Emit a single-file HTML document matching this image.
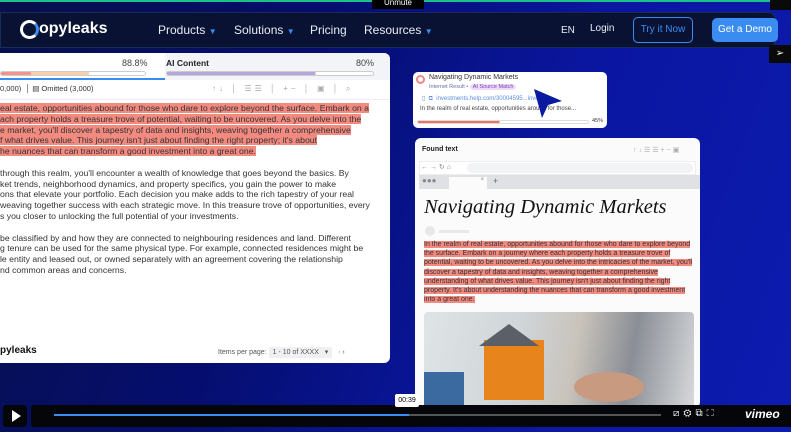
<!DOCTYPE html>
<html><head><meta charset="utf-8"><style>
*{box-sizing:border-box;margin:0;padding:0}
body{width:791px;height:432px;overflow:hidden;position:relative;font-family:"Liberation Sans",sans-serif;background:linear-gradient(110deg,#07104a 0%,#050e6e 35%,#0a16a0 65%,#0d1cb0 100%)}
.abs{position:absolute}
.nav{left:0;top:12px;width:776px;height:36px;background:#0a1233;border:1px solid #1c2a5a;border-radius:0 8px 8px 0}
.nav span{position:absolute;color:#e8ecf5;font-size:12px;top:10px}
.hl{background:#f28a80}
.lp{left:0;top:53px;width:390px;height:310px;background:#fff;border-radius:0 6px 6px 0;overflow:hidden}
.txt{font-size:8.7px;line-height:10.8px;color:#333;white-space:nowrap}
.ftxt{font-size:7px;line-height:9.2px;color:#333;white-space:nowrap}
</style></head><body>
<div class="abs" style="left:0;top:0;width:791px;height:2px;background:#1ec08a"></div>
<div class="abs" style="left:372px;top:0;width:52px;height:9px;background:#000;color:#fff;font-size:8px;line-height:5px;text-align:center">Unmute</div>
<div class="abs" style="left:770px;top:0;width:21px;height:10px;background:#0a0a0a"></div>
<div class="abs nav">
 <div class="abs" style="left:19px;top:7px;width:19px;height:19px;border:3px solid #fff;border-radius:50%;border-right-color:#3a8cf0"></div>
 <span style="left:38px;top:7px;font-size:16px;font-weight:bold;color:#fff">opyleaks</span>
 <span style="left:157px">Products <b style="color:#3a8cf0;font-size:8px">▼</b></span>
 <span style="left:233px">Solutions <b style="color:#3a8cf0;font-size:8px">▼</b></span>
 <span style="left:309px">Pricing</span>
 <span style="left:363px">Resources <b style="color:#3a8cf0;font-size:8px">▼</b></span>
 <span style="left:560px;font-size:10px;top:12px">EN</span>
 <span style="left:589px;font-size:10px;top:10px">Login</span>
 <div class="abs" style="left:632px;top:4px;width:60px;height:26px;border:1px solid #3a8cf0;border-radius:5px;color:#3a8cf0;font-size:10px;line-height:24px;text-align:center">Try it Now</div>
 <div class="abs" style="left:711px;top:5px;width:66px;height:24px;background:#3a8cf0;border-radius:5px;color:#fff;font-size:10px;line-height:24px;text-align:center">Get a Demo</div>
</div>
<div class="abs" style="left:769px;top:45px;width:22px;height:18px;background:#0a0a0a;color:#fff;font-size:10px;text-align:center;line-height:18px">➢</div>

<div class="abs lp">
 <div class="abs" style="left:0;top:0;width:165px;height:27px;border-bottom:2px solid #3a8cf0"></div>
 <div class="abs" style="left:122px;top:5px;font-size:9px;color:#444">88.8%</div>
 <div class="abs" style="left:0;top:18px;width:146px;height:5px;border:1px solid #ccc;border-radius:3px;background:linear-gradient(90deg,#f5938a 0 21%,#fbd0a8 21% 61%,#fff 61%)"></div>
 <div class="abs" style="left:165px;top:0;width:225px;height:27px;background:#f3f4f7"></div>
 <div class="abs" style="left:166px;top:5px;font-size:8.5px;font-weight:bold;color:#222">AI Content</div>
 <div class="abs" style="left:356px;top:5px;font-size:9px;color:#444">80%</div>
 <div class="abs" style="left:166px;top:18px;width:208px;height:5px;border:1px solid #ccc;border-radius:3px;background:linear-gradient(90deg,#b8a5dc 0 72%,#fff 72%)"></div>
 <div class="abs" style="left:0;top:31px;font-size:7.5px;color:#333">0,000) &nbsp;│ ▤ Omitted (3,000)</div>
 <div class="abs" style="left:212px;top:31px;font-size:8px;color:#aaa;letter-spacing:3px">↑↓ │ ☰☰ │ +− │ ▣ │ ⌕</div>
 <div class="abs" style="left:0;top:46px;width:390px;height:1px;background:#eee"></div>
 <div class="abs txt" style="left:0;top:50px">
  <span class="hl">eal estate, opportunities abound for those who dare to explore beyond the surface. Embark on a</span><br>
  <span class="hl">ach property holds a treasure trove of potential, waiting to be uncovered. As you delve into the</span><br>
  <span class="hl">e market, you'll discover a tapestry of data and insights, weaving together a comprehensive</span><br>
  <span class="hl">f what drives value. This journey isn't just about finding the right property; it's about</span><br>
  <span class="hl">he nuances that can transform a good investment into a great one.</span><br><br>
  through this realm, you'll encounter a wealth of knowledge that goes beyond the basics. By<br>
  ket trends, neighborhood dynamics, and property specifics, you gain the power to make<br>
  ons that elevate your portfolio. Each decision you make adds to the rich tapestry of your real<br>
  weaving together success with each strategic move. In this treasure trove of opportunities, every<br>
  s you closer to unlocking the full potential of your investments.<br><br>
  be classified by and how they are connected to neighbouring residences and land. Different<br>
  g tenure can be used for the same physical type. For example, connected residences might be<br>
  le entity and leased out, or owned separately with an agreement covering the relationship<br>
  nd common areas and concerns.
 </div>
 <div class="abs" style="left:0;top:292px;font-size:10px;font-weight:bold;color:#111">pyleaks</div>
 <div class="abs" style="left:218px;top:295px;font-size:7px;color:#555">Items per page: <span style="background:#f0f0f2;padding:2px 4px">1 - 10 of XXXX &nbsp; ▾</span> &nbsp; <span style="color:#aaa">‹</span> ›</div>
</div>

<div class="abs" style="left:413px;top:72px;width:194px;height:56px;background:#fff;border-radius:5px">
 <div class="abs" style="left:3px;top:3px;width:9px;height:9px;border-radius:50%;border:2px solid #e88"></div>
 <div class="abs" style="left:16px;top:2px;font-size:7px;color:#333">Navigating Dynamic Markets</div>
 <div class="abs" style="left:16px;top:12px;font-size:5.5px;color:#6a6aa8">Internet Result • <span style="background:#eedcf7;color:#7a3cb8;padding:0 3px;border-radius:4px">AI Source Match</span></div>
 <div class="abs" style="left:9px;top:23px;font-size:6px;color:#5a8ee0">▯ &nbsp;⧉ &nbsp;investments.help.com/30004595...investors...</div>
 <div class="abs" style="left:7px;top:34px;font-size:6px;color:#444">In the realm of real estate, opportunities around for those...</div>
 <div class="abs" style="left:4px;top:48px;width:172px;height:4px;border:1px solid #ddd;border-radius:2px;background:linear-gradient(90deg,#f07060 0 48%,#fff 48%)"></div>
 <div class="abs" style="left:179px;top:46px;font-size:5.5px;color:#333">45%</div>
</div>
<svg class="abs" style="left:528px;top:85px" width="36" height="36"><polygon points="6,4 34,16 20,20 14,33" fill="#0a1aa0"/></svg>

<div class="abs" style="left:415px;top:138px;width:285px;height:270px;background:#fbfbfc;border-radius:6px;overflow:hidden">
 <div class="abs" style="left:7px;top:8px;font-size:7px;font-weight:bold;color:#222">Found text</div>
 <div class="abs" style="left:218px;top:8px;font-size:7px;color:#aaa;letter-spacing:2px">↑↓☰☰+−▣</div>
 <div class="abs" style="left:4px;top:23px;width:277px;height:14px;background:#fff;border:1px solid #eee"></div>
 <div class="abs" style="left:6px;top:25px;font-size:7px;color:#888">←  →  ↻  ⌂</div>
 <div class="abs" style="left:52px;top:25px;width:226px;height:10px;background:#f2f3f5;border-radius:5px"></div>
 <div class="abs" style="left:4px;top:37px;width:281px;height:14px;background:#dfe1e5"></div>
 <div class="abs" style="left:7px;top:38px;font-size:8px;color:#888">●●●</div>
 <div class="abs" style="left:34px;top:39px;width:38px;height:12px;background:#fbfbfc;font-size:6px;color:#888;text-align:right;padding-right:3px">×</div>
 <div class="abs" style="left:78px;top:38px;font-size:9px;color:#666">+</div>
 <div class="abs" style="left:9px;top:58px;font-family:'Liberation Serif',serif;font-style:italic;font-size:20.5px;color:#111;white-space:nowrap">Navigating Dynamic Markets</div>
 <div class="abs" style="left:10px;top:88px;width:10px;height:10px;border-radius:50%;background:#e8e8ea"></div>
 <div class="abs" style="left:24px;top:92px;width:30px;height:3px;background:#e8e8ea"></div>
 <div class="abs ftxt" style="left:9px;top:102px">
  <span class="hl">In the realm of real estate, opportunities abound for those who dare to explore beyond</span><br>
  <span class="hl">the surface. Embark on a journey where each property holds a treasure trove of</span><br>
  <span class="hl">potential, waiting to be uncovered. As you delve into the intricacies of the market, you'll</span><br>
  <span class="hl">discover a tapestry of data and insights, weaving together a comprehensive</span><br>
  <span class="hl">understanding of what drives value. This journey isn't just about finding the right</span><br>
  <span class="hl">property. It's about understanding the nuances that can transform a good investment</span><br>
  <span class="hl">into a great one.</span>
 </div>
 <div class="abs" style="left:9px;top:174px;width:270px;height:100px;border-radius:4px;background:linear-gradient(100deg,#dfe4e6 0%,#cfd5d8 35%,#c9c3bb 55%,#8a8e96 75%,#d8dadc 100%)">
  <div class="abs" style="left:60px;top:28px;width:60px;height:60px;background:#e7851c"></div>
  <div class="abs" style="left:55px;top:12px;width:0;height:0;border-left:30px solid transparent;border-right:30px solid transparent;border-bottom:22px solid #5b6068"></div>
  <div class="abs" style="left:150px;top:60px;width:70px;height:30px;background:#c89a80;border-radius:50%"></div>
  <div class="abs" style="left:0;top:60px;width:40px;height:40px;background:#3a6aa0"></div>
 </div>
</div>

<div class="abs" style="left:3px;top:405px;width:24px;height:22px;background:#05060a;border-radius:3px"></div>
<svg class="abs" style="left:10px;top:409px" width="12" height="14"><polygon points="2,1 11,7 2,13" fill="#fff"/></svg>
<div class="abs" style="left:31px;top:405px;width:760px;height:22px;background:#05060a;border-radius:3px 0 0 3px"></div>
<div class="abs" style="left:54px;top:414px;width:355px;height:2px;background:#3a8cf0"></div>
<div class="abs" style="left:409px;top:414px;width:252px;height:2px;background:#555"></div>
<div class="abs" style="left:395px;top:394px;width:24px;height:13px;background:#fff;border-radius:2px;font-size:7px;text-align:center;line-height:13px;color:#000">00:39</div>
<div class="abs" style="left:673px;top:408px;font-size:10px;color:#fff;white-space:nowrap;letter-spacing:4px">⧄⚙⧉⛶</div>
<div class="abs" style="left:745px;top:407px;font-size:12px;font-weight:bold;font-style:italic;color:#fff">vimeo</div>
</body></html>
